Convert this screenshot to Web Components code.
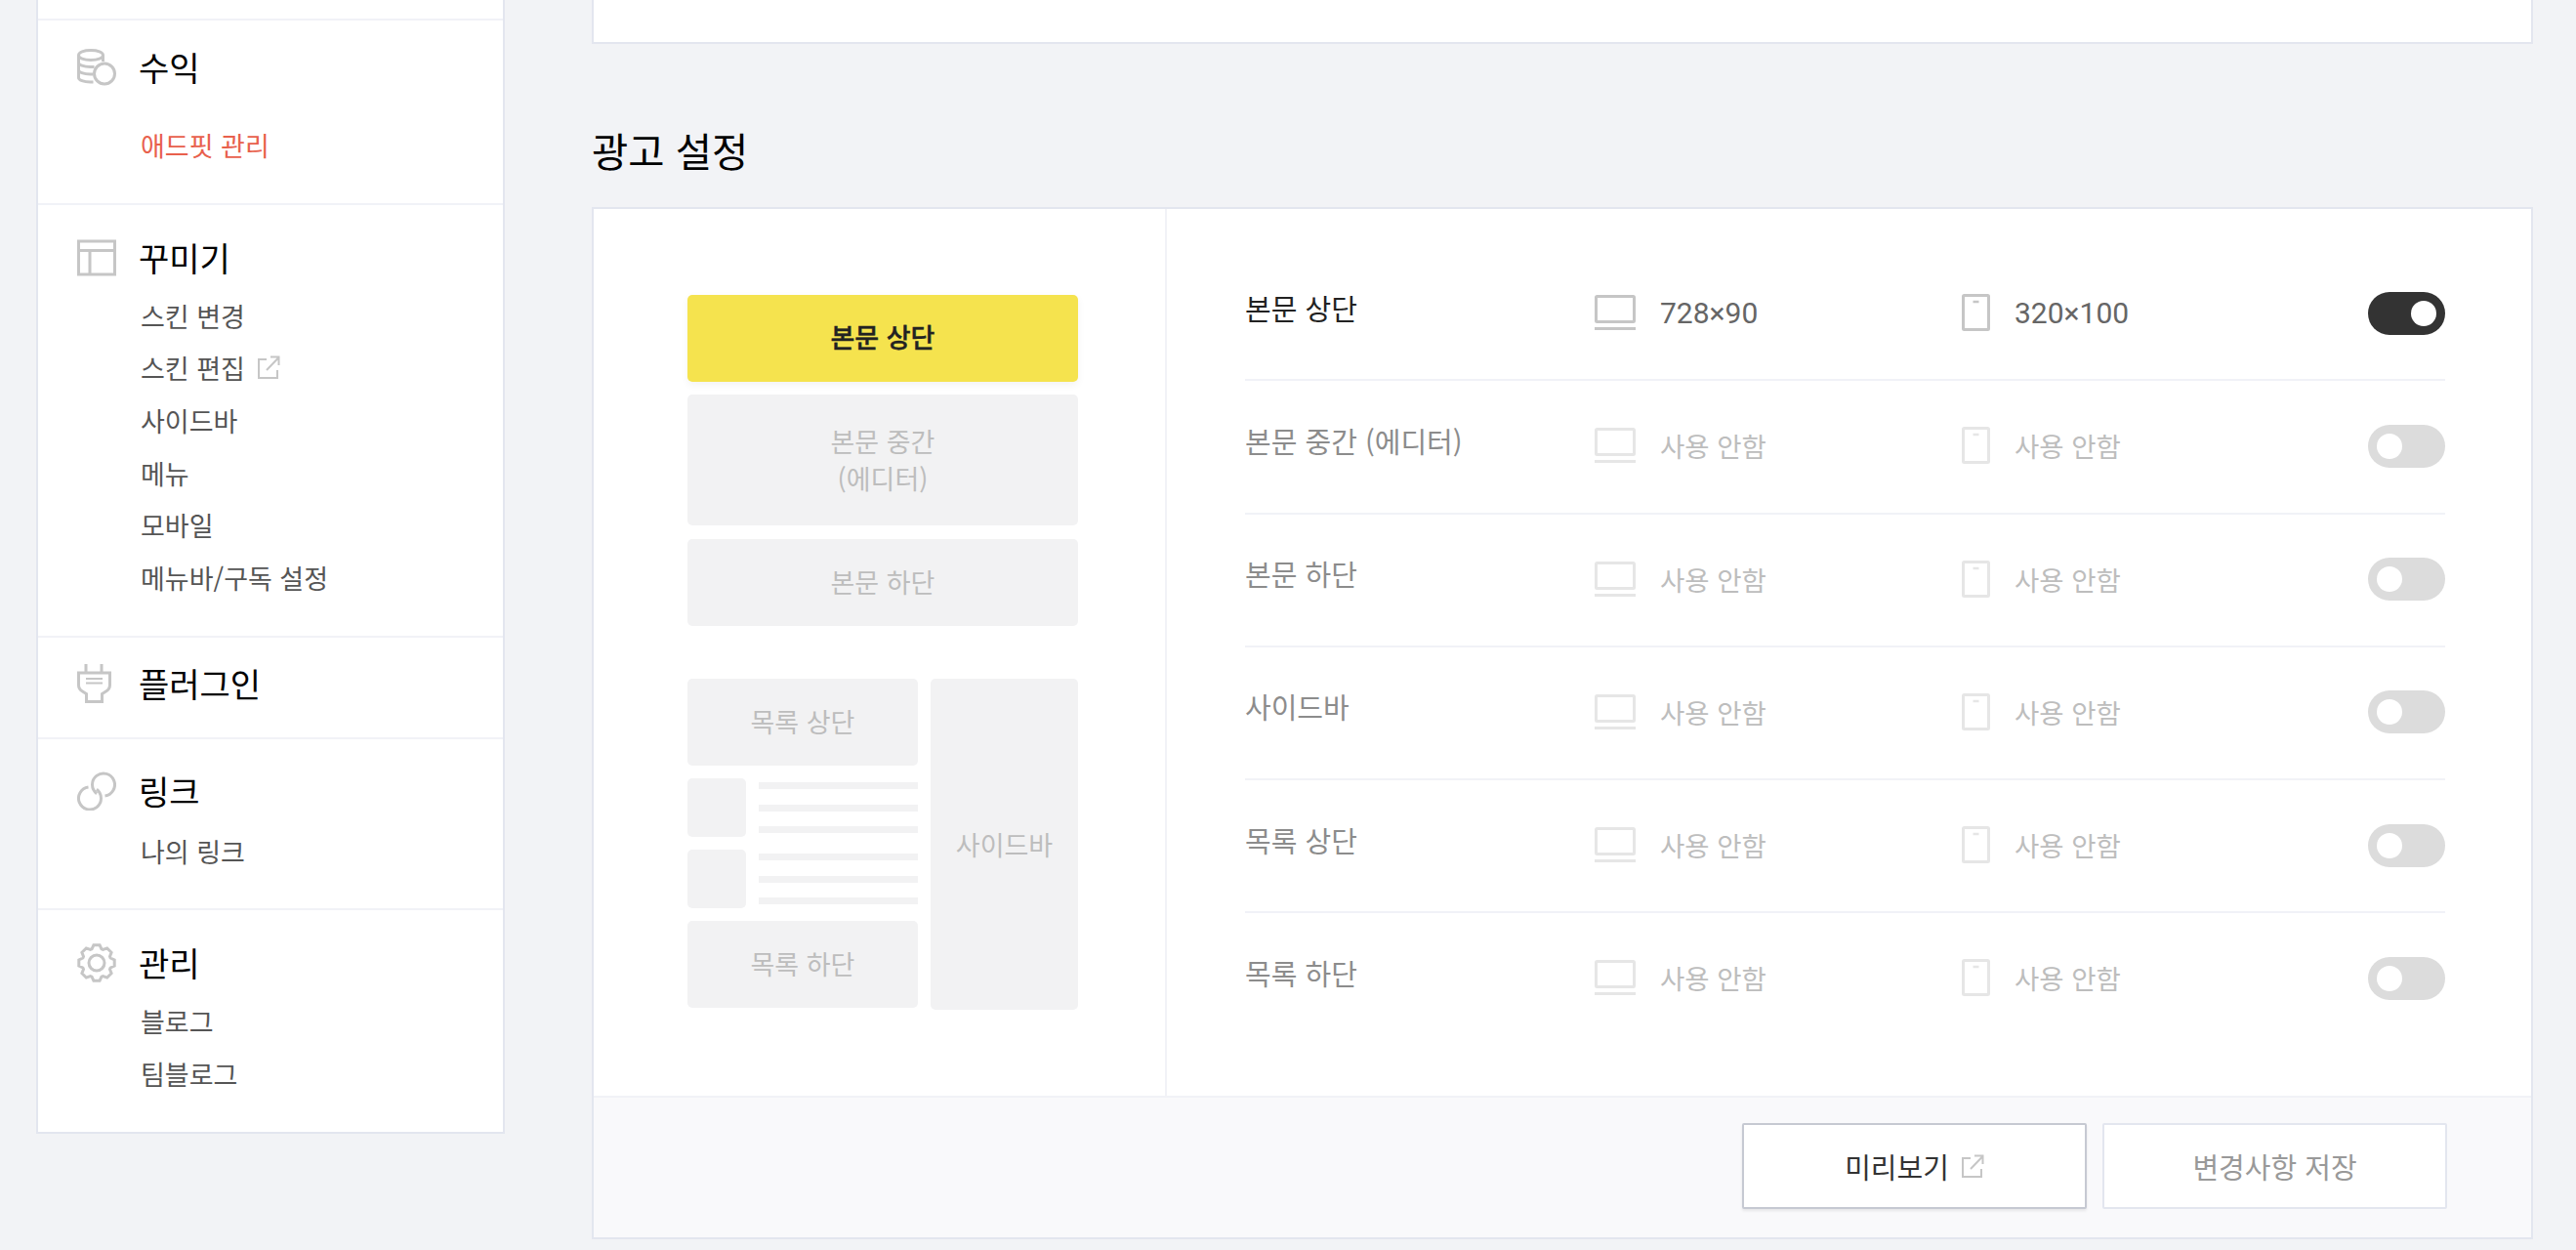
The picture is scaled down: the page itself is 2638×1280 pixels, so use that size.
<!DOCTYPE html>
<html lang="ko">
<head>
<meta charset="utf-8">
<title>광고 설정</title>
<style>
  html, body { margin: 0; height: 1280px; overflow: hidden; background: #f2f3f6; }
  body { font-family: "Noto Sans CJK KR", "Noto Sans", sans-serif; }
</style>
</head>
<body>
<app-page>
  <side-nav slot="side">
    <nav-group label="수익" icon="coins" style="--pt:24px;--gap:29px;--pb:32px">
      <nav-item active>애드핏 관리</nav-item>
    </nav-group>
    <nav-group label="꾸미기" icon="layout" style="--pt:30px;--gap:9px;--pb:33px">
      <nav-item>스킨 변경</nav-item>
      <nav-item external>스킨 편집</nav-item>
      <nav-item>사이드바</nav-item>
      <nav-item>메뉴</nav-item>
      <nav-item>모바일</nav-item>
      <nav-item>메뉴바/구독 설정</nav-item>
    </nav-group>
    <nav-group label="플러그인" icon="plug" style="--pt:23px;--gap:0px;--pb:31px"></nav-group>
    <nav-group label="링크" icon="links" style="--pt:29px;--gap:11px;--pb:31px">
      <nav-item>나의 링크</nav-item>
    </nav-group>
    <nav-group last label="관리" icon="gear" style="--pt:30px;--gap:9px;--pb:33px">
      <nav-item>블로그</nav-item>
      <nav-item>팀블로그</nav-item>
    </nav-group>
  </side-nav>
  <ad-panel>
    <ad-map slot="map"></ad-map>
    <ad-row on label="본문 상단" pc="728×90" mobile="320×100"></ad-row>
    <ad-row label="본문 중간 (에디터)" pc="사용 안함" mobile="사용 안함"></ad-row>
    <ad-row label="본문 하단" pc="사용 안함" mobile="사용 안함"></ad-row>
    <ad-row label="사이드바" pc="사용 안함" mobile="사용 안함"></ad-row>
    <ad-row label="목록 상단" pc="사용 안함" mobile="사용 안함"></ad-row>
    <ad-row last label="목록 하단" pc="사용 안함" mobile="사용 안함"></ad-row>
    <ad-button slot="footer" primary external>미리보기</ad-button>
    <ad-button slot="footer">변경사항 저장</ad-button>
  </ad-panel>
</app-page>

<script>
  // ================================================================= icons
  const gearPath = () => {
    // 8 teeth, outer radius 19, inner radius 15.5, around 20,20
    let d = "";
    for (let i = 0; i < 8; i++) {
      const a = (i * Math.PI) / 4 - Math.PI / 2;
      const pt = (r, off) => (20 + r * Math.cos(a + off)).toFixed(1) + " " + (20 + r * Math.sin(a + off)).toFixed(1);
      d += (i ? "L" : "M") + pt(15, -0.34) + "L" + pt(18.5, -0.17) + "L" + pt(18.5, 0.17) + "L" + pt(15, 0.34);
    }
    return d + "Z";
  };
  const ICONS = {
    coins: `<path d="M1.5 6.5C1.5 3.5 7 1.5 14 1.5s12.5 2 12.5 5-5.500 5-12.500 5-12.500-2-12.500-5Z"/>
      <path d="M1.500 6.500v23c0 2.500 5 4.500 12 4.500h3M1.500 14c0 2.500 5 4.500 12 4.500h4M1.500 21.500c0 2.500 5 4.500 12 4.500h3M26.500 6.500V13"/>
      <circle cx="28" cy="25.500" r="10.500"/>`,
    layout: `<path d="M1.500 1.500h37v34h-37ZM1.500 11h37M13 11v24.500"/>`,
    plug: `<path d="M9 0v9M25 0v9M1.500 9h32v12.500c0 3-1.500 5-4 6.500l-4 2.500V38.500h-16V30.500l-4-2.500c-2.500-1.500-4-3.500-4-6.500Z"/><path d="M9 15h17M9 19.500h17" stroke-width="2"/>`,
    links: `<path d="M28.500 24.900A11.500 11.500 0 1 0 20.100 22.700"/><path d="M11.500 16.100A11.500 11.500 0 1 0 19.900 18.300"/>`,
    gear: `<path d="${gearPath()}"/><circle cx="20" cy="20" r="8"/>`,
  };
  const EXTERNAL = `<svg viewBox="0 0 24 24" fill="none" stroke="#c6c6c6" stroke-width="2"><path d="M10 4H2v19h19v-8M10 15 22.500 2M14 1.500h8.500V10" /></svg>`;

  // ================================================================= app-page
  customElements.define("app-page", class extends HTMLElement {
    constructor() {
      super().attachShadow({ mode: "open" }).innerHTML = `<style>
        :host { display: flex; align-items: flex-start; padding-left: 37px; }
        main { width: 1988px; margin-left: 89px; }
        .stub { height: 43px; background: #fff; border: 2px solid #e3e6ef; border-top: 0; }
        h2 { margin: 79px 0 28px; font: 400 40.5px/60px "Noto Sans CJK KR", sans-serif; color: #000; }
      </style>
      <slot name="side"></slot>
      <main>
        <div class="stub"></div>
        <h2>광고 설정</h2>
        <slot></slot>
      </main>`;
    }
  });

  // ================================================================= side-nav
  customElements.define("side-nav", class extends HTMLElement {
    constructor() {
      super().attachShadow({ mode: "open" }).innerHTML = `<style>
        :host { display: block; width: 480px; box-sizing: border-box; background: #fff; border: 2px solid #e3e6ef; border-top: 0; }
        .stub { height: 19px; border-bottom: 2px solid #f1f2f7; }
      </style>
      <div class="stub"></div>
      <slot></slot>`;
    }
  });

  // ================================================================= nav-group
  customElements.define("nav-group", class extends HTMLElement {
    constructor() {
      super().attachShadow({ mode: "open" });
    }
    connectedCallback() {
      const icon = this.getAttribute("icon");
      const viewbox = { coins: "0 0 40 38", layout: "0 0 40 37", plug: "0 0 40 40", links: "0 0 40 40", gear: "0 0 40 40" }[icon];
      this.shadowRoot.innerHTML = `<style>
        :host { display: block; padding: var(--pt) 0 var(--pb) 40px; border-bottom: 2px solid #f1f2f7; }
        :host([last]) { border-bottom: 0; }
        .title { display: flex; align-items: center; gap: 23px; height: 48px; font-size: 34px; line-height: 48px; color: #000; }
        svg { width: 40px; height: 40px; flex: none; fill: none; stroke: #c6c6c6; stroke-width: 3; }
        .items { margin-top: var(--gap); padding-left: 65px; }
      </style>
      <div class="title"><svg viewBox="${viewbox}">${ICONS[icon]}</svg><span>${this.getAttribute("label")}</span></div>
      <div class="items"><slot></slot></div>`;
    }
  });

  // ================================================================= nav-item
  customElements.define("nav-item", class extends HTMLElement {
    constructor() {
      super().attachShadow({ mode: "open" });
    }
    connectedCallback() {
      this.shadowRoot.innerHTML = `<style>
        :host { display: flex; align-items: center; gap: 12px; height: 53.6px; font-size: 27px; color: #555; }
        :host([active]) { color: #e8604c; }
        svg { width: 24px; height: 24px; margin-top: -2px; }
      </style>
      <slot></slot>${this.hasAttribute("external") ? EXTERNAL : ""}`;
    }
  });

  // ================================================================= ad-panel
  customElements.define("ad-panel", class extends HTMLElement {
    constructor() {
      super().attachShadow({ mode: "open" }).innerHTML = `<style>
        :host { display: block; box-sizing: border-box; background: #fff; border: 2px solid #e3e6ef; }
        .body { display: flex; height: 908px; }
        .left { width: 587px; box-sizing: border-box; padding: 88px 0 0 96px; border-right: 2px solid #f1f2f7; }
        .right { flex: 1; padding: 40px 88px 0 80px; }
        footer { display: flex; justify-content: flex-end; align-items: center; gap: 16px; height: 139px; padding: 0 86px 4px 0;
          background: #f9f9fb; border-top: 2px solid #f1f2f7; }
      </style>
      <div class="body">
        <div class="left"><slot name="map"></slot></div>
        <div class="right"><slot></slot></div>
      </div>
      <footer><slot name="footer"></slot></footer>`;
    }
  });

  // ================================================================= ad-map
  customElements.define("ad-map", class extends HTMLElement {
    constructor() {
      const post = `<div class="post"><i class="thumb"></i><div class="lines"><i></i><i></i><i></i></div></div>`;
      super().attachShadow({ mode: "open" }).innerHTML = `<style>
        :host { display: block; width: 400px; font-size: 27px; line-height: 38px; color: #bdbdbd; }
        .tile { display: flex; align-items: center; justify-content: center; text-align: center; box-sizing: border-box; background: #f2f2f3; border-radius: 5px; }
        .on { height: 89px; padding-bottom: 3px; background: #f5e34e; color: #222; font-weight: 500; -webkit-text-stroke: .4px #222; box-shadow: 0 3px 8px rgba(0,0,0,.05); }
        .top { display: flex; flex-direction: column; gap: 13px; }
        .h89 { height: 89px; padding-bottom: 2px; }
        .h134 { height: 134px; }
        .top .h89 { margin-top: 1px; }
        .bottom { display: flex; gap: 13px; margin-top: 54px; height: 339px; }
        .list { display: flex; flex-direction: column; width: 236px; gap: 13px; }
        .side { flex: 1; }
        .post { display: flex; gap: 13px; height: 60px; }
        .thumb { width: 60px; height: 60px; flex: none; background: #f2f2f3; border-radius: 5px; }
        .lines { flex: 1; display: flex; flex-direction: column; justify-content: space-between; padding: 4px 0; }
        .lines i { display: block; height: 7px; background: #f2f2f3; }
      </style>
      <div class="top">
        <div class="tile on">본문 상단</div>
        <div class="tile h134">본문 중간<br>(에디터)</div>
        <div class="tile h89">본문 하단</div>
      </div>
      <div class="bottom">
        <div class="list">
          <div class="tile h89">목록 상단</div>
          ${post}${post}
          <div class="tile h89">목록 하단</div>
        </div>
        <div class="tile side">사이드바</div>
      </div>`;
    }
  });

  // ================================================================= ad-row
  customElements.define("ad-row", class extends HTMLElement {
    constructor() {
      super().attachShadow({ mode: "open" });
    }
    connectedCallback() {
      this.shadowRoot.innerHTML = `<style>
        :host { display: flex; align-items: center; box-sizing: content-box; height: 134.25px; border-bottom: 2px solid #f1f2f7; }
        :host([last]) { border-bottom: 0; }
        .label { width: 358px; margin-top: -13px; font-size: 29px; color: #8c8c8c; }
        :host([on]) .label { color: #222; }
        .size { display: flex; align-items: center; margin-top: -2px; font-size: 27.5px; color: #bdbdbd; }
        :host([on]) .size { font: 30px Roboto, sans-serif; color: #666; }
        .pc { width: 376px; gap: 25px; }
        .mobile { flex: 1; gap: 25px; }
        toggle-switch { margin-top: -1px; }
        svg { flex: none; fill: none; stroke: #c6c6c6; stroke-width: 3; }
        :host(:not([on])) svg { opacity: .42; }
      </style>
      <div class="label">${this.getAttribute("label")}</div>
      <div class="size pc">
        <svg width="42" height="36" viewBox="0 0 42 36"><rect x="1.500" y="1.500" width="39" height="26" rx="1"/><path d="M0 34.500h42"/></svg>
        <span>${this.getAttribute("pc")}</span>
      </div>
      <div class="size mobile">
        <svg width="29" height="38" viewBox="0 0 29 38"><rect x="1.500" y="1.500" width="26" height="35" rx="1"/><path d="M11.500 8h6" stroke-width="2.500"/></svg>
        <span>${this.getAttribute("mobile")}</span>
      </div>
      <toggle-switch ${this.hasAttribute("on") ? "on" : ""}></toggle-switch>`;
    }
  });

  // ================================================================= toggle-switch
  customElements.define("toggle-switch", class extends HTMLElement {
    constructor() {
      super().attachShadow({ mode: "open" }).innerHTML = `<style>
        :host { display: flex; align-items: center; box-sizing: border-box; width: 79px; height: 44px; padding: 0 9px; border-radius: 22px; background: #dcdcdc; }
        :host([on]) { background: #333; justify-content: flex-end; }
        i { width: 26px; height: 26px; border-radius: 50%; background: #fff; }
      </style><i></i>`;
    }
  });

  // ================================================================= ad-button
  customElements.define("ad-button", class extends HTMLElement {
    constructor() {
      super().attachShadow({ mode: "open" });
    }
    connectedCallback() {
      this.shadowRoot.innerHTML = `<style>
        :host { display: flex; align-items: center; justify-content: center; gap: 12px; box-sizing: border-box; width: 353px; height: 88px;
          background: #fff; border: 2px solid #e3e6ef; border-radius: 2px; font-size: 29px; color: #999; }
        :host([primary]) { border-color: #c6c9d2; color: #333; box-shadow: 0 2px 3px rgba(0,0,0,.08); }
        svg { width: 24px; height: 24px; }
      </style>
      <slot></slot>${this.hasAttribute("external") ? EXTERNAL : ""}`;
    }
  });
</script>
</body>
</html>
